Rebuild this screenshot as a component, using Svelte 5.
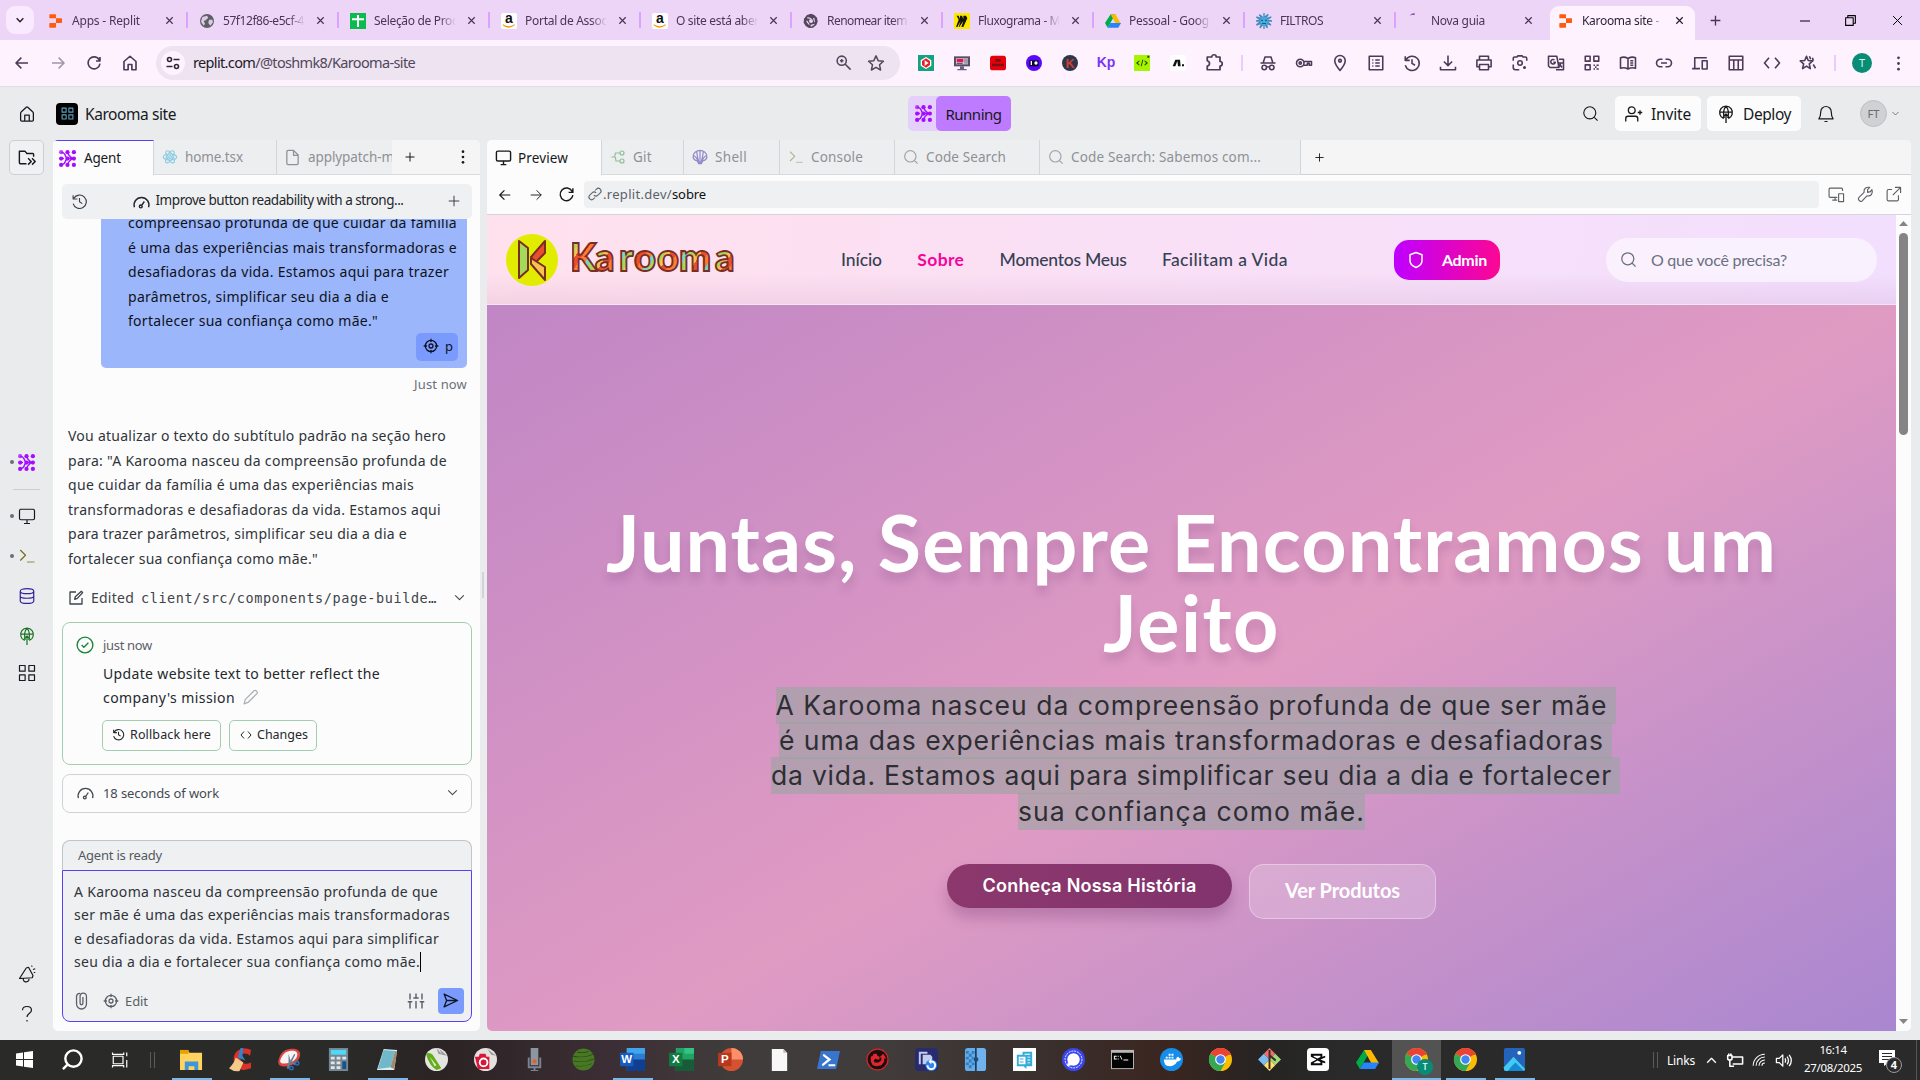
<script>
  // Circle as a path fragment, so every icon stays a plain list of paths.
  const c = (x, y, r) => `M${x - r} ${y}a${r} ${r} 0 1 0 ${2 * r} 0a${r} ${r} 0 1 0 ${-2 * r} 0z`;
  const box = (x, y, w, h) => `M${x} ${y}h${w}v${h}h${-w}z`;

  // Spreads a line of text over a known width by adjusting its letter spacing.
  function fit(el, w) {
    const natural = el.getBoundingClientRect().width;
    el.style.letterSpacing = `${(w - natural) / el.textContent.length}px`;
  }

  // 24x24 stroke icons
  const lines = {
    back: 'M21 12H3M11 4l-8 8 8 8',
    forward: 'M3 12h18M13 4l8 8-8 8',
    reload: 'M20 7.5A9 9 0 1 0 21 13M21 3v6h-6',
    home: 'M4 10l8-7 8 7v11h-5.500v-7h-5v7H4z',
    homeR: 'M3.500 11c0-1 .4-1.500 1-2l6.500-6q1-.8 2 0l6.500 6c.6.500 1 1 1 2v9q0 1.500-1.500 1.500h-14q-1.500 0-1.500-1.500zM9 21.500v-8h6v8',
    close: 'M5 5l14 14M19 5L5 19',
    down: 'M4 8l8 8 8-8',
    up: 'M4 16l8-8 8 8',
    plus: 'M12 3v18M3 12h18',
    search: c(11, 11, 8.5) + 'M17 17l5 5',
    zoomin: c(9.5, 9.5, 6.5) + 'M14.500 14.500L22 22M9.500 7v5M7 9.500h5',
    star: 'M12 2.500l2.900 6.400 7 .8-5.200 4.700 1.400 6.900L12 17.800l-6.100 3.500 1.400-6.900L2.100 9.700l7-.8z',
    puzzle: 'M3 4h6c0-4 6-4 6 0h5v6c4 0 4 6 0 6v5H3v-5c4-1 4-6 0-7z',
    incog: 'M2 12h20M5.500 12L8 4h8l2.500 8' + c(7, 18, 3) + c(17, 18, 3) + 'M10 17.500q2-1 4 0',
    key: c(7, 12, 5) + c(7, 12, 1.5) + 'M12 10h10v5h-3v-2.500h-2.500V15H12',
    pin: 'M12 22C7 16 5 13 5 9a7 7 0 0 1 14 0c0 4-2 7-7 13z' + c(12, 9, 1.8),
    list: box(3, 3, 18, 18) + 'M7 8h1.500M7 12h1.500M7 16h1.500M11 8h6M11 12h6M11 16h6',
    history: 'M4 7.500A9.500 9.500 0 1 1 3 15M3 3v5.500h6M12 7v5.500l4 2.500',
    download: 'M12 2v13M6.500 10l5.500 5.500 5.500-5.500M2 17v4h20v-4',
    print: 'M6 8V3h12v5M6 17H2.500V8h19v9H18' + box(6, 14, 12, 7),
    lens: 'M3 9V6q0-2 2-2h3l1-1.500h6L16 4h3q2 0 2 2v3M3 14v4q0 3 3 3h5' + c(12, 12, 3) + c(18, 18, 1),
    translate: 'M2 3h11l3 15H4L2 16zM16 7h6v14H12M10 8a3 3 0 1 0 1 3H8.500M15 12h6M18 12q0 4-4 6M17 14l3 4',
    qr: box(3, 3, 6.5, 6.5) + box(14.5, 3, 6.5, 6.5) + box(3, 14.5, 6.5, 6.5) + 'M14 15h2M18 15h3M16 17.500h2M14 20h2M18 20h3',
    book: 'M12 6Q7 3 2 5v14q5-1.500 10 1 5-2.500 10-1V5q-5-2-10 1zM12 6v14M15 9h4M15 12h4M15 15h4',
    link: 'M10 7H7a5 5 0 0 0 0 10h3M14 7h3a5 5 0 0 1 0 10h-3M8 12h8',
    devices: 'M5 19V5h16M1.500 19.500H12' + box(15, 9, 6.5, 11),
    layout: box(3, 3, 18, 18) + 'M3 8h18M9 8v13M15 8v13',
    code: 'M8 5l-6 7 6 7M16 5l6 7-6 7',
    shine: 'M10 3l2.300 5.700 6 .500-4.600 4 1.400 6.300-5.100-3.300-5.200 3.300 1.400-6.300-4.600-4 6-.500zM14 3l1.500 4M18 5l1 4M19 14l3 5',
    folder: 'M12 20H5q-2 0-2-2V4h7l2.500 3H20q1 0 1 1.500V11M14 13l4 4-4 4M19 13l4 4-4 4',
    react: c(12, 12, 2) + 'M12 7.500c6 0 10 2 10 4.500s-4 4.500-10 4.500-10-2-10-4.500 4-4.500 10-4.500M8.100 9.700c3-5.200 6.700-7.900 8.900-6.700s1.600 5.900-1.400 11-6.900 7.900-9 6.600-1.500-5.700 1.500-10.900M15.900 9.700c3 5.200 3.600 9.600 1.400 10.900s-6-1.500-9-6.600-3.500-9.800-1.300-11 5.900 1.500 8.900 6.700',
    file: 'M13.500 2H6q-2 0-2 2v16q0 2 2 2h12q2 0 2-2V8.500zM13.500 2v7H20',
    monitor: 'M4 3h16q2 0 2 2v10q0 2-2 2H4q-2 0-2-2V5q0-2 2-2zM8 22h8M12 17v5',
    git: 'M2 12h5l1-6h7M8 12l1 6h6' + c(18, 6, 3) + c(18, 18, 3),
    shell: 'M8 18C4 17 1 14 2 10c0-4 5-8 10-8s10 4 10 8c1 4-2 7-6 8l-2 4h-4zM12 3v18M7 4q1 9 3.500 17M17 4q-1 9-3.500 17M3 10q4 2 6 9M21 10q-4 2-6 9',
    prompt: 'M3 4l7 7-7 7',
    under: 'M12 20h10',
    chain: 'M10 14a5 5 0 0 0 7 0l4-4a4.500 4.500 0 0 0-6.500-6.500L12 6M14 10a5 5 0 0 0-7 0l-4 4a4.500 4.500 0 0 0 6.500 6.500L12 18',
    responsive: 'M13 16H3q-1.500 0-1.500-1.500v-10Q1.500 3 3 3h16q1.500 0 1.500 1.500V7M6 20h7M10 16v4' + box(15, 11, 7, 11),
    wrench: 'M15 9l4-1 2-3c2 5-1 10-7 9L7 21.500q-2 1-4-1t-.500-4L10 9c-1-5 3-8 8-7l-3 3z',
    external: 'M14 2h8v8M22 2L11 13M10 5H5Q3 5 3 7v12q0 2 2 2h12q2 0 2-2v-6',
    gauge: 'M2 20a10.500 10.500 0 1 1 20 0M11.500 18.500L16 12' + c(11, 19, 2),
    target: c(12, 12, 8.5) + c(12, 12, 3) + 'M12 1v5M12 18v5M1 12h5M18 12h5',
    edit: 'M12 3H3v18h18V12M10 14l1-4L20 2l2 2-8 8.500z',
    check: c(12, 12, 10.5) + 'M7.500 12l3 3 6-6',
    pencil: 'M3 21l1.500-6L17 2.500q1.500-1.500 3.500.5t.5 3.500L8.500 19z',
    clip: 'M5 5v12a7 7 0 0 0 14 0V6a4.500 4.500 0 0 0-9 0v10a2 2 0 0 0 4 0V7M5 7q0-5 5-5',
    sliders: 'M4 2v8M12 2v5M20 2v8M8.500 8h7M1 13h6M4 13v9M12 12v10M17 13h6M20 13v9',
    send: 'M3 3l19 9-19 9 3.500-9zM6.500 12H22',
    db: 'M3 5.500C3 1 21 1 21 5.500v13c0 4.500-18 4.500-18 0zM3 5.500c0 4.500 18 4.500 18 0M3 12c0 4 18 4 18 0',
    globe: 'M9 18a8.500 8.500 0 1 1 6 0M4 9.500h16M12 2C8 5 8 13 10 17M12 2c4 3 4 11 2 15M12 12v12M7.500 17l4.500-5 4.500 5',
    grid: box(2, 2, 7.5, 7.5) + box(14.5, 2, 7.5, 7.5) + box(2, 14.5, 7.5, 7.5) + box(14.5, 14.5, 7.5, 7.5),
    mega: 'M2 18L11 4l3-1 6 11-1 3zM7 18q0 5 4 4.500 4-.5 3.500-4M18 2l1-1M20 6l3-1M21 10h2',
    help: 'M6 7q0-5 6-5t6 5c0 4-6 4-6 9M12 20v2',
    user: c(9, 7, 4.5) + 'M1 22v-4q0-3 3-3h10q3 0 3 3v4M20 7v6M17 10h6',
    bell: 'M2.500 18.500C5 15 5 13 5 9a7 7 0 0 1 14 0c0 4 0 6 2.500 9.500zM10 22h4',
    shield: 'M12 2l8 3v8c0 4-3 7-8 9-5-2-8-5-8-9V5z',
    min: 'M2 12h20',
    restore: box(3, 7, 14, 14) + 'M7 7V3h14v14h-4',
    taskview: 'M3 7h13v10H3zM2 2v2.500h15V2M2 22v-2.500h15V22M21 2v5M21 12v10',
    wifi: 'M2 22A20 20 0 0 1 22 2M7 22A15 15 0 0 1 22 7M12 22a10 10 0 0 1 10-10M17 22a5 5 0 0 1 5-5',
    volume: 'M2 9h4l5-5v16l-5-5H2zM14 9q2 3 0 6M17 6.500q4 5.500 0 11M20 4q6 8 0 16',
    battery: 'M8 7h14v10H8M1 5h6v5q-3 3-6 0zM2.500 2v3M5.500 2v3M4 12v8h6'
  };

  const dots = [3, 12, 21];
  const replitMark = [['M3 2h8q1 0 1 1v5H3q-1 0-1-1V3q0-1 1-1zM12 8h8q1 0 1 1v5q0 1-1 1h-8zM3 15h9v6q0 1-1 1H3q-1 0-1-1v-5q0-1 1-1z', '#ff5b0a']];
  const amazon = [['M3 0h18q3 0 3 3v18q0 3-3 3H3q-3 0-3-3V3q0-3 3-3z', '#fff'], ['M3 17q9 6 17 0l1 1q-10 8-19 0z', '#ff9900']];
  const drive = [['M8.500 2h7L8 15l-4 7-4-7z', '#00ac47'], ['M8.500 2h7L24 16h-8z', '#ffba00'], ['M4 22l4-7h16l-4 7z', '#2684fc']];
  const chrome = [[c(12, 12, 12), '#fbbc04'], ['M12 12L1.600 6A12 12 0 0 1 22.400 6z', '#ea4335'], ['M12 12L1.600 6A12 12 0 0 0 12 24l5-9z', '#34a853'], ['M12 7h10.800a12 12 0 0 0-1-2L12 5z', '#ea4335'], [c(12, 12, 5.6), '#fff'], [c(12, 12, 4.4), '#4285f4']];

  // Full-colour artwork: [path, fill] pairs, plus optional lettering
  const art = {
    replit: { p: replitMark },
    world: { p: [[c(12, 12, 10.5), '#5c6064'], ['M5 6l7-2 2 3-4 4-3 1 2 4-2 3-4-6zM15 10l5 0 1 4-4 5-3-4z', '#dccbe4']] },
    sheet: { p: [[box(0, 0, 24, 24), '#0cbb50'], ['M10.500 3h3v5H21v3h-7.500v10h-3V11H3V8h7.500z', '#fff']] },
    amazon: { p: amazon, t: 'a', tc: '#111', ts: 21, ty: 15 },
    gpt: { p: [['M12 1l5 2 4 4 1 6-2 5-5 4-6 .5-5-3-3-5 .5-6L6 3z', '#55465c'], [c(12, 12, 3), '#edd5f8'], ['M7 6l6 2-1 1-6-1zM17 7l1 7-1 0-2-6zM6 11l4 6-1 1-4-5zM11 18l6-2 0 1.500-5 3z', '#edd5f8']] },
    miro: { p: [[box(0, 0, 24, 24), '#fbe900'], ['M4 4h3l2 5 0-5h3l2 5V4h4l2 4-6 13h-3l3-9-6 9H7l3-9-5 9H3l4-11z', '#17140a']] },
    drive: { p: drive },
    gear: { p: [['M11 0h2v5l5-4 1 2-3 4 7-2v2l-5 3 6 1v2l-6 0 5 4-1 2-5-2 1 5-2 1-3-5v6h-2v-6l-4 5-2-1 2-5-6 2-1-2 5-4-5 0v-2l5-1-5-3 1-2 6 2-3-4 2-1 5 4z', '#438db8'], [c(12, 12, 6), '#45a9e2'], ['M8 10h2v2H8zM14 10h2v2h-2zM9 15h6v1H9z', '#0b456e']] },
    spin: { p: [['M4 4q5-5 8-3l-1 2q-3-1-7 1z', '#833a9d']] },
    play: { p: [[box(0, 0, 24, 24), '#12a383'], ['M12 3l8 5v8l-8 5-8-5V8z', '#fff'], ['M12 5l6 4v6l-6 4-6-4V9z', '#ed1d24'], ['M10 8l6 4-6 4z', '#fff']] },
    screen: { p: [[box(0, 2, 24, 15), '#574e64'], [box(3, 5, 18, 9), '#d9d4e2'], [box(4, 6, 10, 5), '#e4145a'], ['M9 17h6v4h4v2H5v-2h4z', '#6d6080'], ['M4 12h9v1H4zM16 6h1v7h-1zM19 6h1v7h-1z', '#333']] },
    redbox: { p: [['M4 1h16q4 0 4 4v14q0 4-4 4H4q-4 0-4-4V5q0-4 4-4z', '#e70009'], ['M3 13h18v4H3zM8 6h8v4H8z', '#7e1015']] },
    purple: { p: [[c(12, 12, 12), '#5a08fa'], ['M5 8h14v9H5z', '#0c0730'], [c(15, 12, 2.5), '#fff'], ['M7 9h2v6H7z', '#fff']] },
    kdark: { p: [[c(12, 12, 12), '#2b3848']], t: 'K', tc: '#d93a35', ts: 19, ty: 19 },
    kp: { p: [], t: 'Kp', tc: '#7b35f5', ts: 21, ty: 18 },
    lime: { p: [[box(0, 0, 24, 24), '#a6f500'], ['M8 8l-5 4 5 4v-2l-2.500-2L8 10zM16 8l5 4-5 4v-2l2.500-2L16 10zM12.500 7h1.500l-2.500 10H10zM20 1h3v3h-3z', '#2d450a']] },
    nwhite: { p: [['M3 0h18q3 0 3 3v18q0 3-3 3H3q-3 0-3-3V3q0-3 3-3z', '#fff'], ['M4 17L8 7h7l1 10h-4l-1-8-3 8zM18 14h3v3h-3z', '#111']] },
    explorer: { p: [['M0 2h8l2 3h13v18H0z', '#ffd35d'], ['M0 2h9v4H0z', '#e5a100'], ['M5 14h14v9h-4v-4H9v4H5z', '#3996df']] },
    cclean: { p: [['M23 2C14-2 6 2 5 10s4 13 11 13l7-2v-6q-6 3-9 0-4-4-1-8 4-3 9 1z', '#dc3126'], ['M12 0h3l-1 8 3 5-8-3z', '#3382cc'], ['M7 10l8 5-4 9q-6 1-11-3 5-4 7-11z', '#f5c989']] },
    snip: { p: [['M12 1c8-1 12 2 11 7S17 18 9 19-1 17 1 11 6 2 12 1z', '#e04440'], ['M12 3c6-1 9 1 8 5s-5 7-11 8-8-1-6-5 4-7 9-8z', '#f4f4f5'], ['M11 6l2 7 4-7 1 1-4 8 5 1-1 2-5-2-2 6-2-1 2-6z', '#6b7f90'], [c(20, 16, 2.6), '#1e79c9'], [c(14, 21, 2.6), '#1e79c9'], [c(20, 16, 1.1), '#332b2d'], [c(14, 21, 1.1), '#332b2d']] },
    calc: { p: [[box(2, 0, 20, 24), '#788694'], [box(4, 2, 16, 5), '#4ed9f7'], ['M4 9h4v3H4zM10 9h4v3h-4zM16 9h4v3h-4zM4 14h4v3H4zM10 14h4v3h-4zM4 19h4v3H4zM10 19h4v3h-4z', '#e1e6e9'], [box(16, 14, 4, 8), '#14538b']] },
    notepad: { p: [['M8 1l14 1-3 21H1z', '#d7eef2'], ['M8 2l12 1-5 17-13 2z', '#71b8cb'], ['M20 3l2 1-3 18-4-2z', '#a48a69']] },
    corel: { p: [[c(12, 12, 12), '#e5e5e2'], ['M15 1l8 7-5-1zM12 0l6 7-4-1z', '#999'], ['M1 6q4-2 7 1l9 14-5 2Q4 18 1 6z', '#64ad18'], ['M5 9l7 9-2 1z', '#e3efcb']] },
    corelred: { p: [[c(12, 12, 12), '#e5e1df'], ['M14 1l9 7-5-1z', '#999'], ['M1 9h4l1-3h6l1 3h3v13H4z', '#d71638'], [c(10, 15, 5), '#fff'], [c(10, 15, 3), '#d71638']] },
    mic: { p: [['M8 0h8v18H8z', '#8c96a0'], ['M5 10h2v9h10v-9h2v11h-6v2h3v1H8v-1h3v-2H5z', '#7b838c'], [c(12, 14, 2.2), '#f05d20']] },
    ball: { p: [[c(12, 12, 11.5), '#4a7724'], ['M2 8q10 3 20-2v1Q12 11 1 9zM1 13q11 3 22-2v1q-11 4-21 2zM3 18q9 2 18-2l-1 1q-8 3-15 2zM5 5q8 1 13-1l-1-.5Q10 5 7 4z', '#244d13']] },
    word: { p: [[box(6, 0, 19, 24), '#2b7cd3'], [box(6, 12, 19, 12), '#103f91'], [box(6, 0, 19, 6), '#41a5ee'], [box(-1, 5, 14, 14), '#185abd']], t: 'W', tc: '#fff', ts: 12, tx: 6, ty: 16 },
    excel: { p: [[box(6, 0, 19, 24), '#21a366'], [box(6, 12, 19, 12), '#185c37'], [box(15, 0, 10, 6), '#33c481'], [box(-1, 5, 14, 14), '#107c41']], t: 'X', tc: '#fff', ts: 12, tx: 6, ty: 16 },
    ppt: { p: [[c(13, 12, 12), '#d35230'], ['M13 0a12 12 0 0 1 12 12H13z', '#ff8f6b'], [box(-1, 5, 14, 14), '#b7381c']], t: 'P', tc: '#fff', ts: 12, tx: 6, ty: 16 },
    page: { p: [['M4 1h12l4 4v19H4z', '#f8f8f8'], ['M16 1v4h4z', '#bbb']] },
    ps: { p: [['M4 3h20l-4 19H0z', '#3775ce'], ['M7 6l8 6-9 7-1-2 6-5-5-4zM12 17h7v2h-7z', '#fff']] },
    redgear: { p: [[c(12, 12, 11.5), '#dc242b'], [c(12, 12, 10.3), '#17100f'], ['M5 9l2-1 1-2h3l1 2 2 1v3h-2l-2-1-2 2 1 2h4l3-2v-3h-2l4-4 3 5h-2v3l-3 4-5 1-4-1-2-4z', '#e3242b']] },
    restoreapp: { p: [['M4 0h16q4 0 4 4v16q0 4-4 4H4q-4 0-4-4V4q0-4 4-4z', '#292b70'], ['M4 4h9v2H6v11H4zM8 7h8l2 2v8H8z', '#c5cdee'], [c(17, 18, 6), '#3186ed'], ['M14 18a3 3 0 1 0 3-3v2l-3-3 3-3v2a5 5 0 1 1-5 5z', '#fff']] },
    zip: { p: [['M4 0h8v24H4q-3 0-3-3V3q0-3 3-3z', '#63ace9'], ['M13 0h7q3 0 3 3v18q0 3-3 3h-7z', '#6fb2ee'], ['M11.500 0H13v24h-1.500z', '#183c69'], [c(12.5, 12, 2.5), '#234b79'], ['M2 3h3v3H2zM8 3h3v3H8zM5 6h3v3H5zM2 9h3v3H2zM8 9h2v3H8zM5 12h3v3H5zM2 15h3v3H2zM8 15h3v3H8zM5 18h3v3H5z', '#337fbe']] },
    bluedoc: { p: [[box(0, 0, 24, 24), '#fff'], ['M4 7h6V4h10v15h-6v3l-3-3H4z', '#35acd8'], ['M6 9h7v8H6zM12 6h6v1h-6zM15 9h3v1h-3zM15 12h3v1h-3zM15 15h3v1h-3z', '#fff'], ['M7 11h4v1H7zM7 14h4v1H7z', '#35acd8']] },
    signal: { p: [[c(12, 12, 12), '#3946ec'], [c(12, 12, 6.5), '#fff'], ['M6 15l-1 4 5-1z', '#fff']], ring: '#fff' },
    cmd: { p: [[box(0, 2, 24, 20), '#b8b8b8'], [box(1, 5, 22, 16), '#030303'], ['M3 8h3v1H4v2h2v1H3zM7 8h1v1H7zM7 11h1v1H7zM9 8h1l2 4h-1zM13 12h5v1h-5z', '#fff']] },
    docker: { p: [[c(12, 12, 12), '#168de9'], ['M4 12h13q0-3 2-3 1 2 3 2-1 3-4 3-3 5-8 5-6 0-6-7zM6 9h2v2H6zM9 9h2v2H9zM12 9h2v2h-2zM9 6h2v2H9zM12 6h2v2h-2z', '#fff']] },
    chrome: { p: chrome },
    gitapp: { p: [['M12 0l6 6-6 6-6-6z', '#ef6e68'], ['M18 6l6 6-6 6-6-6z', '#a4d97b'], ['M12 12l6 6-6 6-6-6z', '#ffe16c'], ['M6 6l6 6-6 6-6-6z', '#7dbdf2'], ['M11 2h2v20h-2zM13 7l6 5-1 2-5-4z', '#3f2d2a']] },
    capcut: { p: [['M4 0h15q4 0 4 4v16q0 4-4 4H4q-4 0-4-4V4q0-4 4-4z', '#fff'], ['M4 6h12v3l3-1v2l-5 2 5 2v2l-3-1v3H4v-3l6-3-6-3zM7 8v1l4 2 3-1.500V8zM7 15.500V16h7v-1.500L11 13z', '#0b0b0b']] },
    photos: { p: [['M3 0h18q2 0 2 2v20q0 2-2 2H3q-2 0-2-2V2q0-2 2-2z', '#2463ba'], ['M1 20l10-11 12 13q0 2-2 2H3q-2 0-2-2z', '#46c9f1'], ['M9 19l4-4 9 9H5z', '#1489d6'], [c(17, 5, 2), '#fff']] }
  };

  const tabs = [
    ['replit', 'Apps - Replit', 68], ['world', '57f12f86-e5cf-4', 81], ['sheet', 'Seleção de Prod', 85], ['amazon', 'Portal de Assoc', 82],
    ['amazon', 'O site está aber', 83], ['gpt', 'Renomear item', 80], ['miro', 'Fluxograma - M', 82], ['drive', 'Pessoal - Goog', 80],
    ['gear', 'FILTROS', 43], ['spin', 'Nova guia', 54], ['replit', 'Karooma site -', 77]
  ];
  const extensions = ['play', 'screen', 'redbox', 'purple', 'kdark', 'kp', 'lime', 'nwhite'];
  const tools = ['incog', 'key', 'pin', 'list', 'history', 'download', 'print', 'lens', 'translate', 'qr', 'book', 'link', 'devices', 'layout', 'code', 'shine'];

  const bubble = [
    ['compreensão profunda de que cuidar da família', 329], ['é uma das experiências mais transformadoras e', 329],
    ['desafiadoras da vida. Estamos aqui para trazer', 321], ['parâmetros, simplificar seu dia a dia e', 261], ['fortalecer sua confiança como mãe."', 250]
  ];
  const reply = [
    ['Vou atualizar o texto do subtítulo padrão na seção hero', 378], ['para: "A Karooma nasceu da compreensão profunda de', 379],
    ['que cuidar da família é uma das experiências mais', 346], ['transformadoras e desafiadoras da vida. Estamos aqui', 373],
    ['para trazer parâmetros, simplificar seu dia a dia e', 339], ['fortalecer sua confiança como mãe."', 250]
  ];
  const draft = [
    ['A Karooma nasceu da compreensão profunda de que', 364], ['ser mãe é uma das experiências mais transformadoras', 376],
    ['e desafiadoras da vida. Estamos aqui para simplificar', 365], ['seu dia a dia e fortalecer sua confiança como mãe.', 346]
  ];
  const hero = [
    ['A Karooma nasceu da compreensão profunda de que ser mãe', 832, 8], ['é uma das experiências mais transformadoras e desafiadoras', 825, 8],
    ['da vida. Estamos aqui para simplificar seu dia a dia e fortalecer', 841, 7], ['sua confiança como mãe.', 347, 0]
  ];
  const editorTabs = [
    ['git', 'Git', 19, 82, '#8fbf99'], ['shell', 'Shell', 32, 96, '#8f8cc9'], ['prompt', 'Console', 52, 115, '#b5b58a'],
    ['search', 'Code Search', 80, 145, '#a2a5a8'], ['search', 'Code Search: Sabemos com...', 190, 261, '#a2a5a8']
  ];
  const taskbar = [
    ['explorer', 1], ['cclean', 0], ['snip', 1], ['calc', 0], ['notepad', 1], ['corel', 0], ['corelred', 0], ['mic', 0], ['ball', 0], ['word', 1],
    ['excel', 0], ['ppt', 0], ['page', 0], ['ps', 0], ['redgear', 0], ['restoreapp', 0], ['zip', 0], ['bluedoc', 0], ['signal', 0], ['cmd', 0],
    ['docker', 0], ['chrome', 0], ['gitapp', 0], ['capcut', 0], ['drive', 0], ['chrome', 2], ['chrome', 1], ['photos', 1]
  ];
</script>

{#snippet ic(name, size = 18, sw = 1.6)}
  <svg class="ic" width={size} height={size} viewBox="0 0 24 24" fill="none" stroke="currentColor" stroke-width={sw} stroke-linejoin="round"><path d={lines[name]} />{#if name === 'prompt'}<path d={lines.under} opacity=".65" />{/if}</svg>
{/snippet}

{#snippet pic(name, size = 16)}
  <svg class="ic" width={size} height={size} viewBox="0 0 24 24">
    {#each art[name].p as [d, fill]}<path {d} {fill} />{/each}
    {#if art[name].ring}<circle cx="12" cy="12" r="8.800" fill="none" stroke={art[name].ring} stroke-width="1" stroke-dasharray="2 1" />{/if}
    {#if art[name].t}<text class="letter" x={art[name].tx ?? 12} y={art[name].ty} font-size={art[name].ts} fill={art[name].tc} text-anchor="middle">{art[name].t}</text>{/if}
  </svg>
{/snippet}

{#snippet agent(size)}
  <svg class="ic" width={size} height={size} viewBox="0 0 24 24" fill="#a50dff" stroke="#a50dff">
    {#each dots as y}{#each dots as x}<circle cx={x} cy={y} r="3" stroke="none" opacity={x + y < 9 ? 0.75 : 1} />{/each}{/each}
    <path d="M3 3q5 1 6 5t5 4q-4 0-5 4t-6 5M12 3q1 5 7 9-6 4-7 9M3 12h4M12 12h9" fill="none" stroke-width="2" />
  </svg>
{/snippet}

{#snippet kebab(size)}
  <svg class="ic" width={size} height={size} viewBox="0 0 24 24" fill="currentColor"><circle cx="12" cy="4" r="2" /><circle cx="12" cy="12" r="2" /><circle cx="12" cy="20" r="2" /></svg>
{/snippet}

{#snippet pinned(dot, icon)}
  <div class="pinned"><i class:on={dot}></i>{#if icon === 'agent'}{@render agent(17)}{:else}{@render ic(icon, 18)}{/if}</div>
{/snippet}

<div class="screen">
  <div class="strip">
    <div class="menu">{@render ic('down', 10, 3.5)}</div>
    {#each tabs as [icon, label, w], i}
      <div class="tab" class:current={i === 10} class:nosep={i >= 9}>
        {@render pic(icon)}
        <div class="tabname"><span class="fit" use:fit={w}>{label}</span></div>
        {@render ic('close', 11, 2.6)}
      </div>
    {/each}
    <div class="newtab">{@render ic('plus', 13, 2.5)}</div>
    <div class="controls">{@render ic('min', 12, 2)}{@render ic('restore', 13, 2)}{@render ic('close', 15, 1.6)}</div>
  </div>

  <div class="toolbar">
    <div class="nav"><span>{@render ic('back', 16, 2.4)}</span><span class="dim">{@render ic('forward', 16, 2.4)}</span><span>{@render ic('reload', 16, 2.4)}</span><span>{@render ic('home', 18, 2.2)}</span></div>
    <div class="omni">
      <div class="site"><svg width="14" height="14" viewBox="0 0 14 14" fill="none" stroke="#302537" stroke-width="1.600"><circle cx="3.500" cy="3.500" r="2" /><path d="M7.500 3.500h6M.5 10.500h6" /><circle cx="10.500" cy="10.500" r="2" /></svg></div>
      <span class="fit url" use:fit={222}><b>replit.com</b>/@toshmk8/Karooma-site</span>
      <div class="omniright">{@render ic('zoomin', 17, 2.2)}{@render ic('star', 18, 2)}</div>
    </div>
    <div class="cells">
      {#each extensions as e}<span>{@render pic(e)}</span>{/each}
      <span>{@render ic('puzzle', 18, 2.3)}</span>
    </div>
    <i class="bar"></i>
    <div class="cells">{#each tools as t}<span>{@render ic(t, 18, 2.1)}</span>{/each}</div>
    <i class="bar two"></i>
    <div class="me">T</div>
    <div class="more">{@render kebab(17)}</div>
  </div>

  <div class="app">
    <header>
      <div class="hhome">{@render ic('homeR', 18, 1.7)}</div>
      <div class="applogo">{@render ic('grid', 13, 2)}</div>
      <span class="fit title" use:fit={91}>Karooma site</span>
      <div class="run"><div class="runicon">{@render agent(17)}</div><div class="running"><span class="fit" use:fit={56}>Running</span></div></div>
      <div class="hright">
        <div class="hsearch">{@render ic('search', 17, 1.6)}</div>
        <div class="hbtn inv">{@render ic('user', 18, 1.8)}<span class="fit" use:fit={40}>Invite</span></div>
        <div class="hbtn dep">{@render ic('globe', 18, 1.8)}<span class="fit" use:fit={48}>Deploy</span></div>
        <div class="bell">{@render ic('bell', 18, 1.6)}</div>
        <div class="ft">FT</div>
        <div class="chev">{@render ic('down', 9, 2)}</div>
      </div>
    </header>

    <main>
      <aside>
        <div class="folder">{@render ic('folder', 19, 1.8)}</div>
        <div class="pins">
          {@render pinned(true, 'agent')}
          <hr />
          {@render pinned(true, 'monitor')}
          <div class="olive">{@render pinned(true, 'prompt')}</div>
          <div class="indigo">{@render pinned(false, 'db')}</div>
          <div class="green">{@render pinned(false, 'globe')}</div>
          {@render pinned(false, 'grid')}
        </div>
        <div class="foot">{@render pinned(false, 'mega')}{@render pinned(false, 'help')}</div>
      </aside>

      <section class="left">
        <div class="ptabs">
          <div class="ptab agenttab">{@render agent(17)}<span class="fit" use:fit={37}>Agent</span></div>
          <div class="ptab home"><span class="blue">{@render ic('react', 16, 1.8)}</span><span class="fit" use:fit={58}>home.tsx</span></div>
          <div class="ptab patch">{@render ic('file', 17, 1.8)}<span class="fit" use:fit={86}>applypatch-m</span></div>
          <div class="pend">{@render ic('plus', 12, 2)}{@render kebab(16)}</div>
        </div>
        <div class="chat">
          <div class="session">{@render ic('history', 17, 1.6)}<div>{@render ic('gauge', 17, 2)}<span class="fit" use:fit={248}>Improve button readability with a strong...</span></div>{@render ic('plus', 14, 1.7)}</div>
          <div class="bubble">
            <div class="btext">{#each bubble as [t, w]}<p><span class="fit" use:fit={w}>{t}</span></p>{/each}</div>
            <div class="chip">{@render ic('target', 16, 1.9)}<span>p</span></div>
          </div>
          <div class="when"><span class="fit" use:fit={53}>Just now</span></div>
          <div class="reply">{#each reply as [t, w]}<p><span class="fit" use:fit={w}>{t}</span></p>{/each}</div>
          <div class="edited">{@render ic('edit', 16, 2)}<span class="fit" use:fit={43}>Edited</span><code class="fit" use:fit={296}>client/src/components/page-builde…</code>{@render ic('down', 13, 2)}</div>
          <div class="card">
            <div class="row">{@render ic('check', 18, 1.8)}<span class="fit" use:fit={49}>just now</span></div>
            <p><span class="fit" use:fit={277}>Update website text to better reflect the</span></p>
            <p><span class="fit" use:fit={132}>company's mission</span><i>{@render ic('pencil', 17, 1.8)}</i></p>
            <div class="actions">
              <div>{@render ic('history', 13, 2)}<span class="fit" use:fit={81}>Rollback here</span></div>
              <div>{@render ic('code', 12, 2)}<span class="fit" use:fit={51}>Changes</span></div>
            </div>
          </div>
          <div class="work">{@render ic('gauge', 17, 1.8)}<span class="fit" use:fit={116}>18 seconds of work</span>{@render ic('down', 13, 2)}</div>
          <div class="ready"><span class="fit" use:fit={84}>Agent is ready</span></div>
          <div class="input">
            {#each draft as [t, w], i}<p><span class="fit" use:fit={w}>{t}</span>{#if i === 3}<i class="caret"></i>{/if}</p>{/each}
            <div class="inbar">{@render ic('clip', 17, 1.8)}<span class="tgt">{@render ic('target', 16, 1.9)}</span><span class="fit" use:fit={23}>Edit</span><span class="sl">{@render ic('sliders', 18, 1.9)}</span><div class="send">{@render ic('send', 17, 1.9)}</div></div>
          </div>
        </div>
      </section>
      <div class="handle"></div>

      <section class="right">
        <div class="ptabs">
          <div class="ptab preview">{@render ic('monitor', 17, 2)}<span class="fit" use:fit={50}>Preview</span></div>
          {#each editorTabs as [icon, label, w, full, color]}
            <div class="ptab etab" style:width="{full}px"><span class="tint" style:color={color}>{@render ic(icon, 16, 1.8)}</span><span class="fit" use:fit={w}>{label}</span></div>
          {/each}
          <div class="rest">{@render ic('plus', 11, 2)}</div>
        </div>
        <div class="address">
          <span>{@render ic('back', 14, 2)}</span><span>{@render ic('forward', 14, 1.6)}</span><span>{@render ic('reload', 17, 2)}</span>
          <div class="field">{@render ic('chain', 14, 1.8)}<span class="fit dom" use:fit={69}>.replit.dev/</span><span class="fit" use:fit={34}>sobre</span></div>
          <div class="addricons">{@render ic('responsive', 17, 1.6)}{@render ic('wrench', 17, 1.6)}{@render ic('external', 17, 1.6)}</div>
        </div>
        <div class="frame">
          <div class="page">
            <div class="sitehead">
              <svg class="mark" width="52" height="52" viewBox="0 0 52 52"><circle cx="26" cy="26" r="26" fill="#e2ec00" /><g stroke="#7a2d25" stroke-width="2" stroke-linejoin="round"><path d="M13 7l9 7v22l-9 8z" fill="#a5d95a" /><path d="M39 7v12L29 29l-4-6z" fill="#ea4f2d" /><path d="M25 24l14 9v13L25 30z" fill="#f8c24f" /></g></svg>
              <svg class="word" width="168" height="36" viewBox="0 0 168 36">
                <defs><linearGradient id="patch" gradientUnits="userSpaceOnUse" x1="0" y1="0" x2="22" y2="14" spreadMethod="repeat">
                  <stop offset="0" stop-color="#a5d95a" /><stop offset=".24" stop-color="#a5d95a" /><stop offset=".24" stop-color="#f8c24f" /><stop offset=".4" stop-color="#f8c24f" /><stop offset=".4" stop-color="#ea4f2d" /><stop offset=".62" stop-color="#ea4f2d" /><stop offset=".62" stop-color="#ff7a35" /><stop offset=".84" stop-color="#ff7a35" /><stop offset=".84" stop-color="#7bd5cc" /><stop offset="1" stop-color="#7bd5cc" />
                </linearGradient></defs>
                <text class="wordtext" x="-2 23 47 62 85 107 143" y="29">Karooma</text>
              </svg>
              <nav><span class="fit" use:fit={41}>Início</span><span class="fit pink" use:fit={47}>Sobre</span><span class="fit" use:fit={127}>Momentos Meus</span><span class="fit" use:fit={126}>Facilitam a Vida</span></nav>
              <div class="admin">{@render ic('shield', 18, 2)}<span class="fit" use:fit={45}>Admin</span></div>
              <div class="find">{@render ic('search', 17, 1.8)}<span class="fit" use:fit={136}>O que você precisa?</span></div>
            </div>
            <div class="herobox">
              <div class="hero">
                <h1><span class="fit" use:fit={1171}>Juntas, Sempre Encontramos um</span><br /><span class="fit" use:fit={177}>Jeito</span></h1>
                <div class="lead">{#each hero as [t, w, pad]}<p><mark class="fit" use:fit={w}>{t}</mark>{#if pad}<i></i>{/if}</p>{/each}</div>
                <div class="cta"><div class="b1"><span class="fit" use:fit={214}>Conheça Nossa História</span></div><div class="b2"><span class="fit" use:fit={115}>Ver Produtos</span></div></div>
              </div>
            </div>
          </div>
          <div class="scroll"><svg width="15" height="18" viewBox="0 0 15 18"><path d="M3 11h9l-4.500-5z" fill="#858585" /></svg><div class="thumb"></div><svg class="dn" width="15" height="18" viewBox="0 0 15 18"><path d="M3 6h9l-4.500 5z" fill="#858585" /></svg></div>
        </div>
      </section>
    </main>
  </div>

  <footer>
    <div class="start"><svg width="17" height="17" viewBox="0 0 17 17" fill="#fff"><path d="M0 2.500l7-1V8H0zM8 1.300L17 0v8H8zM0 9h7v6.500l-7-1zM8 9h9v8l-9-1.300z" /></svg></div>
    <div class="start flip">{@render ic('search', 23, 2.5)}</div>
    <div class="start">{@render ic('taskview', 18, 1.6)}</div>
    <div class="grip"></div>
    {#each taskbar as [icon, state]}
      <div class="task" class:open={state} class:focus={state === 2}>{@render pic(icon, 23)}{#if state === 2}<b class="badge">T</b>{/if}</div>
    {/each}
    <div class="tray">
      <div class="grip g2"></div><span class="fit links" use:fit={28}>Links</span>
      <span class="t1">{@render ic('up', 13, 2.4)}</span><span>{@render ic('battery', 17, 2.2)}</span><span>{@render ic('wifi', 14, 1.8)}</span><span>{@render ic('volume', 17, 1.8)}</span>
      <div class="clock"><span class="fit" use:fit={27}>16:14</span><span class="fit" use:fit={58}>27/08/2025</span></div>
      <div class="notif"><svg width="17" height="17" viewBox="0 0 17 17"><path d="M0 0h16v13H9l-4 3v-3H0z" fill="#fff" /><path d="M3 3.500h10M3 6.500h10M3 9.500h7" stroke="#2b2b2b" /></svg><b>4</b></div>
    </div>
  </footer>
</div>

<style>
  :global(body) { margin: 0; overflow: hidden; }
  * { box-sizing: border-box; }
  p, h1 { margin: 0; }
  .screen { width: 1920px; height: 1080px; display: flex; flex-direction: column; overflow: hidden; font-family: "Noto Sans", "Open Sans", sans-serif; background: #eaebed; color: #17191c; }
  .ic { display: block; flex: none; overflow: visible; }
  .fit { display: inline-block; white-space: nowrap; flex: none; }
  .letter { font-family: "Liberation Sans", sans-serif; font-weight: 700; }

  .strip { height: 40px; flex: none; background: #edd5f8; display: flex; align-items: flex-start; color: #4a3652; }
  .menu { width: 28px; height: 28px; margin: 6px 3px 0 6px; border-radius: 9px; background: #faeaff; display: grid; place-items: center; color: #222; }
  .tab { width: 151px; height: 34px; margin-top: 6px; padding: 0 0 5px 11px; display: flex; align-items: center; font-size: 12px; background: linear-gradient(#dca2ff, #dca2ff) right 6px / 2px 16px no-repeat; }
  .tab.nosep { background: none; }
  .tab.current { width: 145px; margin-left: 3px; padding: 0 0 5px 8px; background: #fef2ff; border-radius: 9px 9px 0 0; color: #2c1b33; }
  .tabname { width: 82px; overflow: hidden; margin: 0 10px 0 8px; mask-image: linear-gradient(90deg, #000 80%, transparent); height: 18px; line-height: 18px; }
  .newtab { margin: 14px 0 0 14px; }
  .controls { display: flex; align-items: center; gap: 33px; margin: 13px 15px 0 auto; color: #000; }

  .toolbar { height: 47px; flex: none; background: #fef2ff; border-bottom: 1px solid #e4dae9; display: flex; align-items: center; color: #4e3a56; }
  .nav { display: flex; margin-left: 4px; }
  .nav span, .cells span { width: 36px; display: grid; place-items: center; }
  .dim { opacity: .5; }
  .omni { margin-left: 8px; width: 744px; height: 34px; border-radius: 17px; background: #ede3f1; display: flex; align-items: center; font-size: 14.500px; color: #52475a; }
  .omni b { font-weight: 400; color: #221a28; }
  .url { margin-top: -2px; }
  .site { width: 24px; height: 24px; border-radius: 50%; background: #fef2ff; margin: 0 8px 0 5px; display: grid; place-items: center; }
  .omniright { margin-left: auto; margin-right: 15px; display: flex; gap: 15px; }
  .cells { display: flex; margin-left: 8px; }
  .bar { width: 2px; height: 16px; background: #eccbfb; margin: 0 0 0 9px; }
  .bar + .cells { margin-left: 7px; }
  .bar.two { margin-left: 8px; }
  .me { width: 20px; height: 20px; border-radius: 50%; background: #078d76; color: #d8f3ec; font-size: 11px; line-height: 20px; text-align: center; margin-left: 16px; }
  .more { margin-left: 18px; }

  .app { height: 953px; display: flex; flex-direction: column; background: #eaebed; }
  header { height: 53px; flex: none; display: flex; align-items: center; font-size: 15.500px; }
  .hhome { margin-left: 18px; }
  .applogo { margin-left: 20px; width: 22px; height: 22px; border-radius: 4px; background: #000; color: #5aa3bd; display: grid; place-items: center; }
  .title { margin-left: 7px; }
  .run { margin-left: 732px; display: flex; width: 103px; height: 35px; border-radius: 5px; background: #e5d0fb; }
  .runicon { width: 28px; display: grid; place-items: center; padding-left: 2px; }
  .running { width: 75px; border-radius: 5px; background: #bf7bff; display: grid; place-items: center; font-size: 15px; }
  .hright { margin-left: auto; display: flex; align-items: center; height: 100%; }
  .hsearch { margin-right: 16px; }
  .hbtn { height: 35px; border-radius: 5px; background: #fcfcfc; display: flex; align-items: center; padding-left: 10px; gap: 8px; }
  .inv { width: 86px; margin-right: 6px; }
  .dep { width: 94px; }
  .bell { margin: 0 25px 0 16px; }
  .ft { width: 27px; height: 27px; border-radius: 50%; background: #cfd1d3; border: 1px solid #bcc0c3; font-size: 11px; line-height: 25px; text-align: center; color: #666b70; }
  .chev { margin: 0 20px 0 4px; color: #555; }

  main { flex: 1; display: flex; padding-bottom: 9px; min-height: 0; }
  aside { width: 53px; display: flex; flex-direction: column; }
  .folder { width: 35px; height: 35px; margin-left: 9px; border: 1px solid #cdd0d2; border-radius: 5px; display: grid; place-items: center; background: #f0f1f2; }
  .pins { margin-top: 267px; display: flex; flex-direction: column; }
  .pinned { height: 40px; display: flex; align-items: center; padding-left: 10px; gap: 4px; }
  .pinned i { width: 4px; height: 4px; border-radius: 50%; }
  .pinned i.on { background: #6b6f74; }
  hr { width: 27px; height: 1px; border: 0; background: #cbced1; margin: 7px 0 6px 13px; }
  .olive { color: #74701c; }
  .indigo { color: #33249a; }
  .green { color: #1a7424; height: 37px; }
  .foot { margin: auto 0 -3px; }

  section { background: #fcfcfc; border-radius: 5px; overflow: hidden; display: flex; flex-direction: column; }
  .left { width: 427px; }
  .handle { width: 2px; height: 26px; background: #d1d4d7; align-self: flex-start; margin: 432px 3px 0 2px; }
  .right { width: 1424px; }
  .ptabs { height: 35px; flex: none; display: flex; background: #f5f5f5; font-size: 13.500px; }
  .ptab { display: flex; align-items: center; border-right: 1px solid #d3d6d8; border-bottom: 1px solid #d9dbde; background: #edeef0; color: #8e9195; overflow: hidden; }
  .agenttab { width: 101px; padding-left: 6px; gap: 8px; color: #17191c; background: #fcfcfc; border-bottom: 0; border-top: 1px solid #5b3ff5; }
  .home { width: 123px; padding-left: 8px; gap: 7px; }
  .blue { color: #8fcde2; }
  .patch { width: 115px; padding-left: 7px; gap: 7px; border-right: 0; }
  .pend { flex: 1; border-bottom: 1px solid #d9dbde; display: flex; align-items: center; justify-content: space-between; padding: 0 9px 0 12px; }

  .chat { padding: 9px 8px 9px 9px; display: flex; flex-direction: column; flex: 1; font-size: 14px; }
  .session { height: 35px; flex: none; border-radius: 5px; background: #eff0f2; display: flex; align-items: center; justify-content: space-between; padding: 0 11px 1px 9px; font-size: 13.500px; color: #3c4046; }
  .session > div { display: flex; align-items: center; gap: 6px; color: #23262b; margin-left: 1px; }
  .session .fit { position: relative; top: -1px; }
  .bubble { width: 366px; height: 149px; flex: none; margin-left: 39px; background: #9cb6fb; border-radius: 0 0 5px 5px; overflow: hidden; color: #0d1220; }
  .btext { margin: -8px 0 0 27px; }
  .btext p, .reply p { height: 24.500px; line-height: 24.500px; }
  .chip { width: 42px; height: 28px; margin: -1px 9px 0 auto; border-radius: 5px; background: #7a9bfd; display: flex; align-items: center; gap: 6px; padding: 0 0 1px 7px; font-size: 13px; }
  .when { text-align: right; margin-right: 5px; height: 40px; line-height: 32px; font-size: 13px; color: #6b7078; }
  .reply { margin: 16px 0 0 6px; color: #30343a; height: 147px; }
  .edited { height: 27px; margin: 13px 0 11px 6px; display: flex; align-items: center; color: #3f444b; gap: 0; }
  .edited .fit:nth-of-type(1) { margin-left: 7px; }
  .edited code { margin-left: 4px; font-family: "DejaVu Sans Mono", monospace; font-size: 13.500px; }
  .edited .ic:last-child { margin-left: 16px; }
  .card { height: 143px; flex: none; border: 1px solid #a4cdb0; border-radius: 8px; padding: 12px 0 0 40px; color: #24282d; }
  .row { display: flex; align-items: center; margin-left: -27px; height: 19px; gap: 9px; color: #178532; font-size: 13px; }
  .row .fit { color: #5c6168; }
  .card p { height: 24px; line-height: 24px; display: flex; align-items: center; gap: 7px; padding-top: 1px; position: relative; top: 7px; }
  .card p i { color: #adb1b5; }
  .actions { display: flex; gap: 8px; margin: 18px 0 0 -1px; font-size: 12.500px; }
  .actions div { height: 31px; border: 1px solid #a4cdb0; border-radius: 5px; display: flex; align-items: center; gap: 5px; width: 119px; padding: 0 0 2px 9px; }
  .actions div:last-child { width: 88px; gap: 5px; padding-left: 10px; }
  .work { height: 39px; flex: none; margin-top: 9px; border: 1px solid #cfd2d5; border-radius: 8px; display: flex; align-items: center; padding: 0 12px 2px 14px; color: #454a51; font-size: 13px; gap: 9px; }
  .work .ic:last-child { margin-left: auto; }
  .ready { height: 30px; flex: none; margin-top: auto; border: 1px solid #c0c5c5; border-bottom: 0; border-radius: 8px 8px 0 0; background: #eff0f2; padding-left: 15px; line-height: 28px; font-size: 13px; color: #555a62; }
  .input { height: 152px; flex: none; border: 1px solid #5b3ff5; border-radius: 0 0 8px 8px; background: #eff0f2; padding: 9px 0 0 11px; color: #30343a; }
  .input p { height: 23.400px; line-height: 23.400px; display: flex; align-items: center; }
  .caret { width: 1px; height: 20px; background: #000; }
  .inbar { display: flex; align-items: center; height: 26px; margin-top: 14px; font-size: 13px; color: #5a5f66; padding-right: 7px; }
  .tgt { margin: 0 6px 0 14px; }
  .inbar .ic { margin-left: -1px; }
  .sl { margin-left: auto; margin-right: 13px; }
  .send { width: 26px; height: 26px; border-radius: 4px; background: #7a9bfd; color: #101726; display: grid; place-items: center; }

  .preview { width: 115px; padding-left: 8px; gap: 6px; color: #17191c; background: #fcfcfc; border-bottom: 0; }
  .etab { padding-left: 8px; gap: 7px; }
  .rest { flex: 1; padding: 12px 13px; border-bottom: 1px solid #d0d3d5; }
  .address { height: 40px; flex: none; display: flex; align-items: center; border-bottom: 1px solid #d3d5d8; padding-left: 2px; font-size: 13px; }
  .address > span { width: 31px; display: grid; place-items: center; }
  .field { width: 1235px; height: 27px; margin-left: 2px; border-radius: 4px; background: #eff0f2; display: flex; align-items: center; padding: 0 0 1px 4px; color: #111; }
  .field .ic { color: #60656b; margin-right: 1px; }
  .dom { color: #5c6168; }
  .addricons { display: flex; gap: 11.500px; margin-left: 9px; color: #5c6066; }

  .frame { flex: 1; display: flex; min-height: 0; }
  .page { width: 1409px; display: flex; flex-direction: column; font-family: Lato, "Open Sans", sans-serif; }
  .sitehead { height: 90px; flex: none; display: flex; align-items: center; background: linear-gradient(transparent 65%, rgba(170, 110, 160, .13)), linear-gradient(100deg, #ffe1ed, #fae0f6 45%, #f2dffe); padding-left: 19px; font-size: 17.500px; font-weight: 500; color: #364153; border-bottom: 1px solid #f6e5f5; }
  .mark { flex: none; }
  .word { flex: none; margin-left: 14px; }
  .wordtext { font-family: Lato, sans-serif; font-weight: 900; font-size: 38px; fill: url(#patch); stroke: #7a2d25; stroke-width: 1.800; }
  nav { display: flex; gap: 35.300px; margin-left: 101px; }
  .pink { color: #f5059b; font-weight: 700; }
  .admin { width: 106px; height: 40px; border-radius: 15px; margin-left: 106px; background: linear-gradient(90deg, #bf00ff, #fb0793); color: #fff; display: flex; align-items: center; padding-left: 13px; gap: 17px; font-size: 16px; font-weight: 700; }
  .find { width: 271px; height: 44px; border-radius: 22px; margin-left: 106px; background: rgba(255, 255, 255, .55); display: flex; align-items: center; padding-left: 14px; gap: 14px; font-size: 16px; font-weight: 400; color: #6a7080; }
  .herobox { height: 726px; overflow: hidden; }
  .hero { height: 816px; background: linear-gradient(to bottom right, #c086c5, #e09bc3 50%, #a284d2); display: flex; flex-direction: column; align-items: center; padding-top: 197px; }
  h1 { font-size: 79px; line-height: 79.500px; font-weight: 700; color: #fff; text-align: center; text-shadow: 0 8px 8px rgba(80, 30, 90, .16); height: 185px; }
  .lead { font-family: Inter, sans-serif; font-size: 26.500px; color: #2d2e33; }
  .lead p { height: 35.200px; display: flex; justify-content: center; }
  .lead mark, .lead i { color: inherit; height: 37px; line-height: 37px; background: rgba(148, 166, 158, .55); }
  .lead i { width: 8px; margin-right: -8px; }
  .cta { display: flex; align-items: flex-start; gap: 17px; margin-top: 36px; color: #fff; }
  .b1 { width: 285px; height: 44px; border-radius: 22px; background: linear-gradient(100deg, #8c386d, #82336d); box-shadow: 0 10px 14px rgba(90, 30, 90, .25); display: grid; place-items: center; font: 600 18px Inter, sans-serif; }
  .b2 { width: 187px; height: 55px; border-radius: 15px; background: rgba(255, 255, 255, .2); border: 1px solid rgba(255, 255, 255, .35); display: grid; place-items: center; font-size: 20px; font-weight: 700; padding-bottom: 2px; }
  .scroll { width: 15px; display: flex; flex-direction: column; align-items: center; background: #fcfcfc; }
  .thumb { width: 9px; height: 202px; border-radius: 5px; background: #858585; }
  .dn { margin-top: auto; }

  footer { height: 40px; flex: none; display: flex; color: #fff; background: linear-gradient(90deg, #2a2a29 0 18%, #2b2324 23%, #3c2e35 32%, #403c3b 38% 46%, #3a302d 54%, #3a2520 61%, #252423 66%, #2a2a2a 70%); }
  .start { width: 48px; display: grid; place-items: center; padding-bottom: 1px; }
  .flip .ic { transform: scaleX(-1); }
  .grip { width: 5px; height: 16px; margin: 12px 12px 0 6px; border: solid #5b5b5b; border-width: 0 1px; }
  .task { width: 49px; display: grid; place-items: center; padding-bottom: 1px; }
  .open { background: linear-gradient(#76b9ed, #76b9ed) center bottom / 40px 2px no-repeat; }
  .focus { background: linear-gradient(#76b9ed, #76b9ed) center bottom / 49px 2px no-repeat, #535353; position: relative; }
  .badge { position: absolute; right: 8px; bottom: 5px; width: 16px; height: 16px; border-radius: 50%; background: #078d76; font-size: 9px; line-height: 16px; text-align: center; font-weight: 500; }
  .tray { margin-left: auto; display: flex; align-items: center; font-size: 12px; margin-right: 3px; border-right: 1px solid #555; }
  .g2 { margin: 0 9px 0 0; }
  .tray > span:not(.links) { width: 24px; display: grid; place-items: center; }
  .tray .t1 { margin-left: 4px; }
  .clock { width: 76px; display: flex; flex-direction: column; align-items: center; font-size: 11.500px; line-height: 18px; margin-top: -2px; }
  .notif { width: 45px; padding-left: 8px; position: relative; }
  .notif b { position: absolute; left: 15px; top: 7px; width: 16px; height: 16px; border-radius: 50%; background: #2b2b2b; border: 1px solid #999; font-size: 11px; line-height: 14px; text-align: center; }
</style>
